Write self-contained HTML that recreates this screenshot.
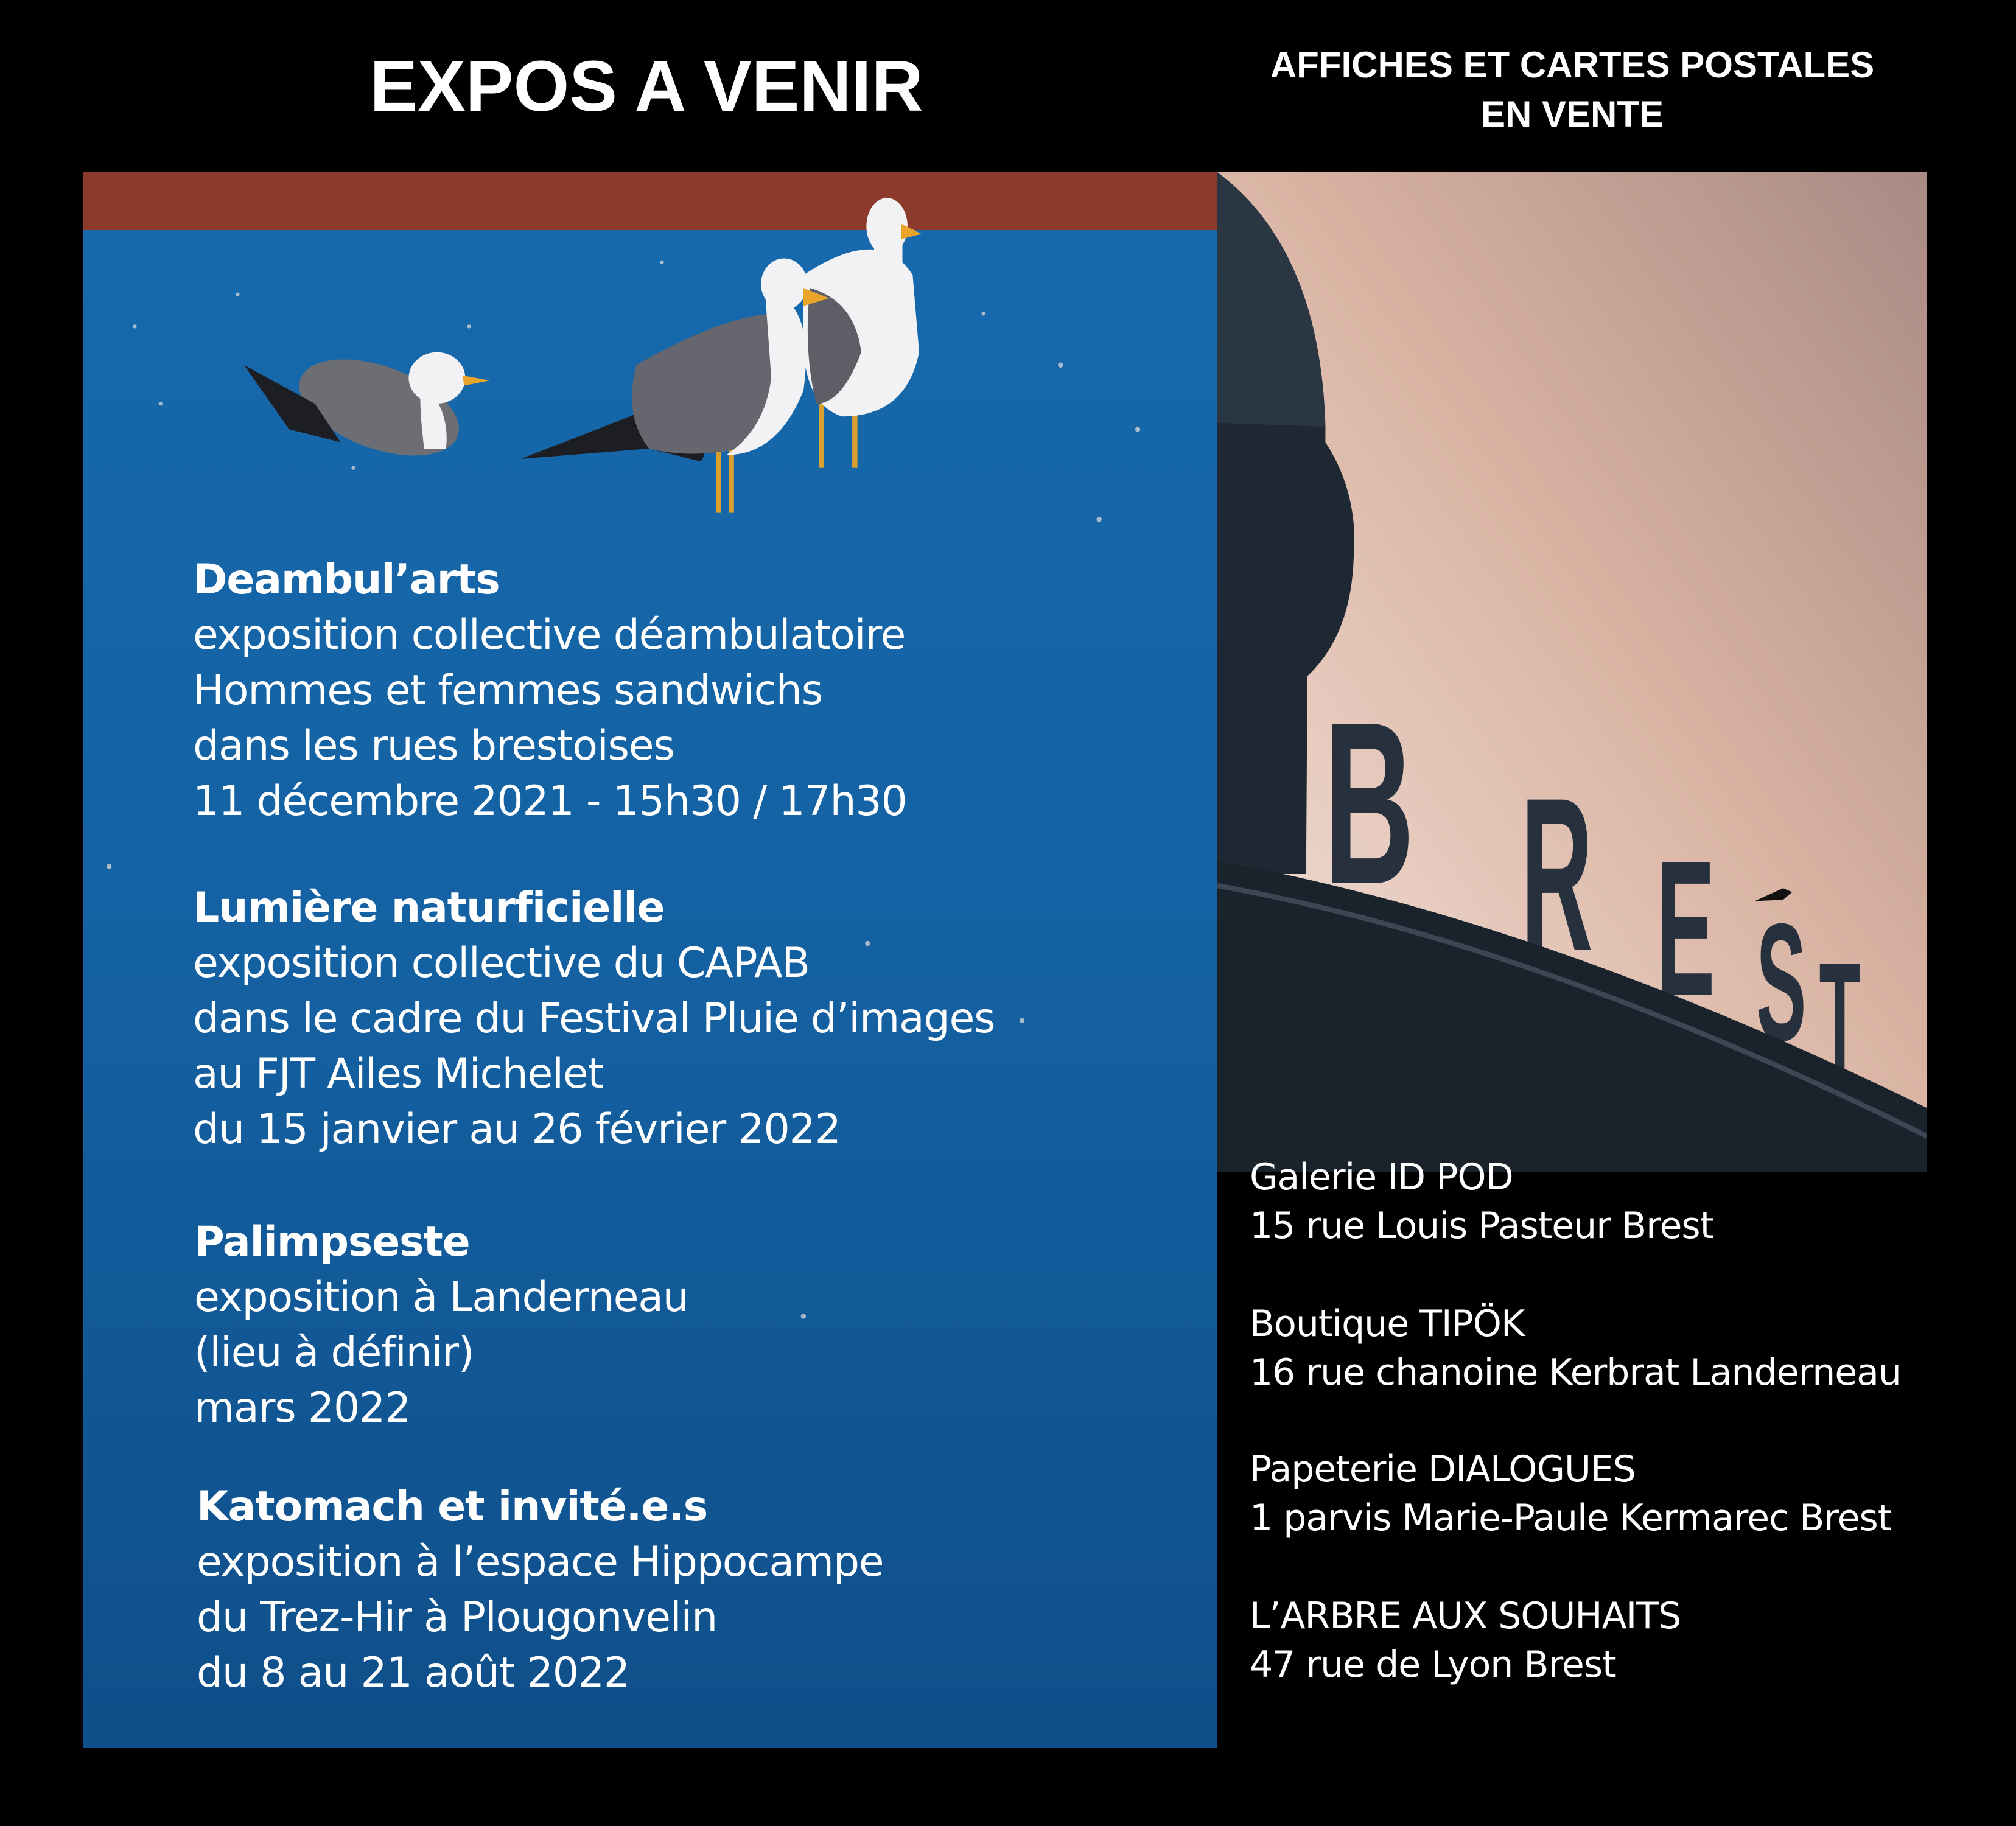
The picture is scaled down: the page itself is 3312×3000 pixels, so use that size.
<!DOCTYPE html>
<html><head><meta charset="utf-8"><style>
html,body{margin:0;padding:0;background:#000;}
body{width:3312px;height:3000px;position:relative;overflow:hidden;font-family:"DejaVu Sans","Liberation Sans",sans-serif;color:#fff;}
.t{position:absolute;white-space:nowrap;}
#title{left:0;width:2124px;text-align:center;top:74px;font-size:118px;font-weight:bold;letter-spacing:0px;font-family:"Liberation Sans",sans-serif;}
#rh{left:2000px;width:1166px;text-align:center;top:66px;font-size:60px;line-height:81px;font-weight:bold;font-family:"Liberation Sans",sans-serif;}
.l{font-size:68px;line-height:91px;font-family:"DejaVu Sans",sans-serif;letter-spacing:-1.2px;}
.l b{font-weight:bold;}
.r{font-size:60px;line-height:80px;left:2053px;letter-spacing:-1px;}
</style></head><body>
<div class="t" id="title">EXPOS A VENIR</div>
<div class="t" id="rh">AFFICHES ET CARTES POSTALES<br>EN VENTE</div>

<svg style="position:absolute;left:137px;top:283px" width="1863" height="2589" viewBox="0 0 882 1226" preserveAspectRatio="none">
<defs><linearGradient id="bl" x1="0" y1="0" x2="0" y2="1"><stop offset="0" stop-color="#176aae"/><stop offset="0.5" stop-color="#1461a2"/><stop offset="1" stop-color="#0f4f8a"/></linearGradient></defs>
<rect width="882" height="1226" fill="url(#bl)"/>
<rect width="882" height="45" fill="#8c3a2b"/>
<g fill="#e8e0d8" opacity="0.7">
<circle cx="120" cy="95" r="1.5"/><circle cx="300" cy="120" r="1.5"/><circle cx="760" cy="150" r="2"/><circle cx="820" cy="200" r="2"/><circle cx="60" cy="180" r="1.5"/><circle cx="790" cy="270" r="2"/><circle cx="210" cy="230" r="1.5"/><circle cx="560" cy="890" r="2"/><circle cx="610" cy="600" r="2"/><circle cx="20" cy="540" r="2"/><circle cx="730" cy="660" r="2"/><circle cx="450" cy="70" r="1.5"/><circle cx="700" cy="110" r="1.5"/><circle cx="40" cy="120" r="1.5"/>
</g>
<!-- gull 1 sitting -->
<g>
<ellipse cx="230" cy="183" rx="65" ry="32" fill="#6d6e74" transform="rotate(20 230 183)"/>
<path d="M125 150 L180 180 L200 210 L160 200 Z" fill="#1d1d24"/>
<ellipse cx="275" cy="160" rx="22" ry="20" fill="#f2f2f4"/>
<path d="M270 170 Q285 190 282 215 L265 215 Q262 190 262 175Z" fill="#f2f2f4"/>
<path d="M295 158 L316 162 L296 166Z" fill="#e8a52a"/>
</g>
<!-- gull 3 back standing -->
<g>
<rect x="572" y="180" width="4" height="50" fill="#d9a030"/><rect x="598" y="180" width="4" height="50" fill="#d9a030"/>
<path d="M560 80 Q620 40 645 80 L650 140 Q640 190 590 190 Q560 180 560 130Z" fill="#f2f2f4"/>
<path d="M565 90 Q600 100 605 140 Q590 180 570 180 Q560 140 565 90Z" fill="#5e5f66"/>
<ellipse cx="625" cy="42" rx="16" ry="22" fill="#f2f2f4"/>
<rect x="615" y="55" width="22" height="50" fill="#f2f2f4"/>
<path d="M636 40 L652 48 L636 52Z" fill="#e8a52a"/>
</g>
<!-- gull 2 front -->
<g>
<rect x="492" y="215" width="4" height="50" fill="#d9a030"/><rect x="502" y="215" width="4" height="50" fill="#d9a030"/>
<path d="M340 223 Q400 200 450 180 L470 170 Q490 215 480 225 L440 215 Z" fill="#1d1d24"/>
<path d="M430 150 Q500 110 540 110 Q560 160 530 210 Q480 225 440 215 Q420 190 430 150Z" fill="#66676e"/>
<path d="M530 90 Q570 100 560 170 Q540 220 500 220 Q530 200 535 160Z" fill="#f2f2f4"/>
<ellipse cx="545" cy="87" rx="18" ry="20" fill="#f2f2f4"/>
<path d="M560 90 L580 98 L560 104Z" fill="#e8a52a"/>
</g>
</svg>

<svg style="position:absolute;left:2000px;top:283px" width="1166" height="1643" viewBox="0 0 552 778" preserveAspectRatio="none">
<defs><linearGradient id="sk" x1="1" y1="0" x2="0" y2="1"><stop offset="0" stop-color="#a98a84"/><stop offset="0.45" stop-color="#d9b3a2"/><stop offset="1" stop-color="#f6e6de"/></linearGradient></defs>
<rect width="552" height="778" fill="url(#sk)"/>
<path d="M0 0 Q80 60 84 198 L84 210 Q110 250 106 300 Q104 360 70 392 L69 546 L0 546Z" fill="#1e2833"/>
<path d="M0 0 Q80 60 84 198 L0 195Z" fill="#2a3642"/>
<g font-family="Liberation Sans,sans-serif" font-weight="bold" fill="#26313d">
<text x="83" y="553" font-size="180" textLength="70" lengthAdjust="spacingAndGlyphs">B</text>
<text x="236" y="605" font-size="170" textLength="56" lengthAdjust="spacingAndGlyphs">R</text>
<text x="341" y="640" font-size="150" textLength="46" lengthAdjust="spacingAndGlyphs">E</text>
<text x="419" y="675" font-size="130" textLength="39" lengthAdjust="spacingAndGlyphs">S</text>
<text x="468" y="705" font-size="130" textLength="32" lengthAdjust="spacingAndGlyphs">T</text>
</g>
<path d="M0 536 Q250 580 552 728 L552 778 L0 778Z" fill="#1a222c"/>
<path d="M0 555 Q250 600 552 750" stroke="#3b4754" stroke-width="4" fill="none"/>
<path d="M418 567 L440 557 L447 560 L440 566 Z" fill="#111"/>
</svg>

<div class="t l" style="left:317px;top:907px"><b>Deambul’arts</b><br>exposition collective déambulatoire<br>Hommes et femmes sandwichs<br>dans les rues brestoises<br>11 décembre 2021 - 15h30 / 17h30</div>
<div class="t l" style="left:317px;top:1446px"><b>Lumière naturficielle</b><br>exposition collective du CAPAB<br>dans le cadre du Festival Pluie d’images<br>au FJT Ailes Michelet<br>du 15 janvier au 26 février 2022</div>
<div class="t l" style="left:319px;top:1995px"><b>Palimpseste</b><br>exposition à Landerneau<br>(lieu à définir)<br>mars 2022</div>
<div class="t l" style="left:323px;top:2430px"><b>Katomach et invité.e.s</b><br>exposition à l’espace Hippocampe<br>du Trez-Hir à Plougonvelin<br>du 8 au 21 août 2022</div>

<div class="t r" style="top:1894px">Galerie ID POD<br>15 rue Louis Pasteur Brest</div>
<div class="t r" style="top:2135px">Boutique TIPÖK<br>16 rue chanoine Kerbrat Landerneau</div>
<div class="t r" style="top:2374px">Papeterie DIALOGUES<br>1 parvis Marie-Paule Kermarec Brest</div>
<div class="t r" style="top:2615px">L’ARBRE AUX SOUHAITS<br>47 rue de Lyon Brest</div>
</body></html>
